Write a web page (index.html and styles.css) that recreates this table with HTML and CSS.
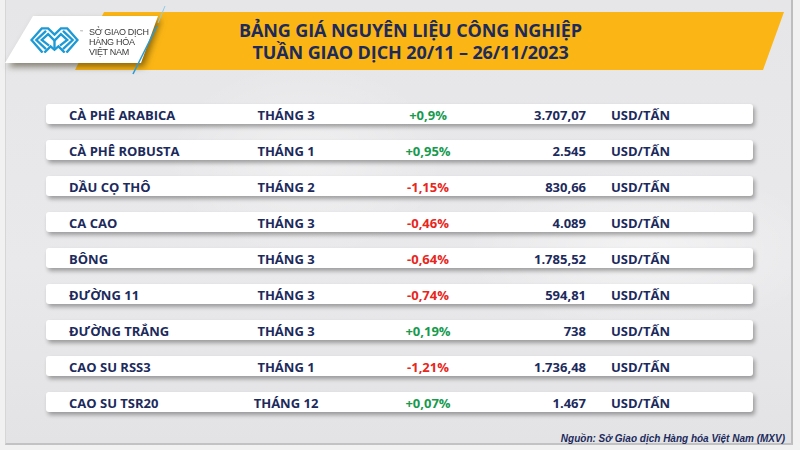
FILE: index.html
```html
<!DOCTYPE html>
<html lang="vi">
<head>
<meta charset="utf-8">
<title>Bảng giá nguyên liệu công nghiệp</title>
<link rel="stylesheet" href="styles.css">
</head>
<body>
<div class="frame">
  <header class="header">
    <div class="banner">
      <h1 class="title">BẢNG GIÁ NGUYÊN LIỆU CÔNG NGHIỆP<br>TUẦN GIAO DỊCH 20/11 – 26/11/2023</h1>
    </div>
    <div class="logo-wrap">
      <div class="logo">
        <svg class="logo-icon" viewBox="0 0 50 26" width="49" height="26">
          <g fill="none" stroke="#1d9ad6" stroke-width="2.4" stroke-linejoin="miter" stroke-linecap="square">
            <path d="M12,25 L1.5,13 L12,1.2 L18.5,1.2 L25,7.5 L31.5,1.2 L38,1.2 L48.5,13 L38,25"/>
            <path d="M15.5,21.5 L6.5,13 L15.5,4.5"/>
            <path d="M34.5,4.5 L43.5,13 L34.5,21.5"/>
            <path d="M18.5,18 L12,13 L18.5,7 L25,13.5 L31.5,7 L38,13 L31.5,18"/>
            <path d="M25,13.5 L25,20"/>
            <path d="M15.5,25 L21,19.5 L25,23 L29,19.5 L34.5,25"/>
          </g>
        </svg>
        <span class="tm">™</span>
        <div class="logo-text">SỞ GIAO DỊCH<br>HÀNG HÓA<br>VIỆT NAM</div>
      </div>
    </div>
    <svg class="slash" viewBox="0 0 40 72" width="40" height="72">
      <line x1="36" y1="2" x2="29" y2="19" stroke="#8ccbec" stroke-width="1"/>
      <line x1="28" y1="22" x2="4" y2="70" stroke="#2a9ad8" stroke-width="1.5"/>
    </svg>
  </header>

  <main class="table">
    <div class="row"><span class="name">CÀ PHÊ ARABICA</span><span class="month">THÁNG 3</span><span class="pct up">+0,9%</span><span class="val">3.707,07</span><span class="unit">USD/TẤN</span></div>
    <div class="row"><span class="name">CÀ PHÊ ROBUSTA</span><span class="month">THÁNG 1</span><span class="pct up">+0,95%</span><span class="val">2.545</span><span class="unit">USD/TẤN</span></div>
    <div class="row"><span class="name">DẦU CỌ THÔ</span><span class="month">THÁNG 2</span><span class="pct down">-1,15%</span><span class="val">830,66</span><span class="unit">USD/TẤN</span></div>
    <div class="row"><span class="name">CA CAO</span><span class="month">THÁNG 3</span><span class="pct down">-0,46%</span><span class="val">4.089</span><span class="unit">USD/TẤN</span></div>
    <div class="row"><span class="name">BÔNG</span><span class="month">THÁNG 3</span><span class="pct down">-0,64%</span><span class="val">1.785,52</span><span class="unit">USD/TẤN</span></div>
    <div class="row"><span class="name">ĐƯỜNG 11</span><span class="month">THÁNG 3</span><span class="pct down">-0,74%</span><span class="val">594,81</span><span class="unit">USD/TẤN</span></div>
    <div class="row"><span class="name">ĐƯỜNG TRẮNG</span><span class="month">THÁNG 3</span><span class="pct up">+0,19%</span><span class="val">738</span><span class="unit">USD/TẤN</span></div>
    <div class="row"><span class="name">CAO SU RSS3</span><span class="month">THÁNG 1</span><span class="pct down">-1,21%</span><span class="val">1.736,48</span><span class="unit">USD/TẤN</span></div>
    <div class="row"><span class="name">CAO SU TSR20</span><span class="month">THÁNG 12</span><span class="pct up">+0,07%</span><span class="val">1.467</span><span class="unit">USD/TẤN</span></div>
  </main>

  <footer class="source">Nguồn: Sở Giao dịch Hàng hóa Việt Nam (MXV)</footer>
</div>
</body>
</html>
```

FILE: styles.css
```css
* { box-sizing: border-box; }

html, body {
  margin: 0;
  padding: 0;
}

body {
  width: 800px;
  height: 450px;
  overflow: hidden;
  background: #f1f1f2;
  font-family: "Open Sans", "Noto Sans", sans-serif;
}

.frame {
  margin-left: 5px;
  width: 788px;
  height: 445px;
  border-left: 1px solid #d6d6d8;
  border-right: 2px solid #bdbdc0;
  border-bottom: 2px solid #c2c2c5;
  background:
    radial-gradient(ellipse 260px 120px at 640px 250px, rgba(255,255,255,0.45), rgba(255,255,255,0) 70%),
    radial-gradient(ellipse 200px 140px at 300px 160px, rgba(255,255,255,0.35), rgba(255,255,255,0) 70%),
    linear-gradient(180deg, #e6e6e8 0%, #e9e9eb 60%, #e3e3e5 100%);
}

.header {
  position: relative;
  height: 70px;
  padding-top: 12px;
}

.banner {
  margin-left: 69px;
  width: 709px;
  height: 58px;
  background: #fbb615;
  clip-path: polygon(29px 0, 100% 0, calc(100% - 21px) 100%, 0 100%);
  padding: 7px 38px 0 0;
}

.title {
  margin: 0;
  font-size: 18px;
  line-height: 22px;
  font-weight: 700;
  color: #1c2a5c;
  text-align: center;
  letter-spacing: -0.1px;
}

.logo-wrap {
  position: absolute;
  left: -1px;
  top: 16px;
  filter: drop-shadow(3px 4px 3px rgba(40, 30, 0, 0.5));
}

.logo {
  width: 153px;
  height: 47px;
  background: #ffffff;
  clip-path: polygon(28px 0, 100% 0, calc(100% - 17px) 100%, 0 100%);
  display: flex;
  align-items: center;
  padding-left: 25px;
  padding-top: 1px;
}

.logo-icon {
  display: block;
  flex: none;
}

.tm {
  align-self: flex-start;
  margin-top: 12px;
  font-size: 4px;
  color: #888;
  margin-left: 1px;
  width: 9px;
}

.logo-text {
  font-family: "Liberation Sans", Arial, sans-serif;
  font-size: 9px;
  line-height: 10px;
  color: #3a3a3a;
  letter-spacing: -0.3px;
  padding-top: 3px;
}

.slash {
  position: absolute;
  left: 123px;
  top: 4px;
}

.table {
  margin: 34px 0 0 40px;
  width: 707px;
  display: flex;
  flex-direction: column;
  gap: 16px;
}

.row {
  height: 20px;
  background: #ffffff;
  border-radius: 3px;
  box-shadow: 2px 3px 4px rgba(0, 0, 0, 0.33);
  display: grid;
  grid-template-columns: 167px 100px 184px 66px 1fr;
  padding: 2px 0 0 23px;
  font-size: 13px;
  line-height: 18px;
  font-weight: 700;
  color: #1c2a5c;
  white-space: nowrap;
}

.month, .pct { text-align: center; }
.val { text-align: right; }
.unit { padding-left: 25px; }

.up { color: #169a4e; }
.down { color: #e8261c; }

.source {
  margin: 21px 0 0 0;
  padding-right: 6px;
  text-align: right;
  font-family: "Liberation Sans", Arial, sans-serif;
  font-size: 10px;
  line-height: 12px;
  font-weight: 700;
  font-style: italic;
  color: #1c2a5c;
}
```
